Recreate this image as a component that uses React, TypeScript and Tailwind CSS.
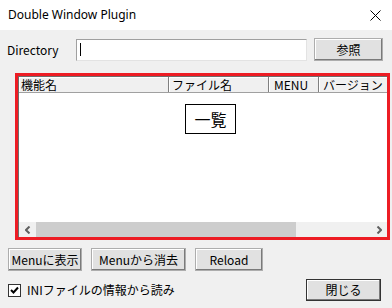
import React from "react";

const jp = { fontFamily: '"Noto Sans CJK JP", "Noto Sans", sans-serif' };

function Btn({ w, children, className = "" }: { w: string; children: React.ReactNode; className?: string }) {
  return (
    <div
      className={`${w} h-[23px] flex items-center justify-center text-[12px] text-black bg-[#e1e1e1] border border-[#adadad] shadow-[inset_-1px_-1px_0_#7a7a7a,inset_1px_1px_0_#ffffff] ${className}`}
    >
      <span className="leading-none">{children}</span>
    </div>
  );
}

export default function App() {
  return (
    <div className="w-[392px] h-[308px] overflow-hidden bg-[#f0f0f0] text-black" style={jp}>
      {/* title bar */}
      <div className="h-[30px] bg-white flex items-center justify-between pl-[8px] pr-[11px]">
        <span className="text-[12px] text-black" style={{ fontFamily: '"Noto Sans", sans-serif' }}>
          Double Window Plugin
        </span>
        <svg width="11" height="11" viewBox="0 0 11 11">
          <path d="M0.5 0.5 L10.5 10.5 M10.5 0.5 L0.5 10.5" stroke="#000" strokeWidth="1" />
        </svg>
      </div>

      {/* directory row */}
      <div className="flex items-center mt-[8px] pl-[7px]">
        <span className="w-[69px] text-[12px] leading-none">Directory</span>
        <div className="w-[231px] h-[22px] bg-white border border-[#a0a0a0] border-r-[#e3e3e3] border-b-[#e3e3e3] flex items-center pl-[3px]">
          <div className="w-px h-[13px] bg-black" />
        </div>
        <Btn w="w-[69px]" className="ml-[7px]">参照</Btn>
      </div>

      {/* red box */}
      <div className="ml-[15px] mt-[12px] w-[375px] h-[167px] border-[3px] border-[#ed1c24] flex">
        <div className="flex-1 flex flex-col border-l border-t border-[#6d6d6d] bg-white min-w-0 overflow-hidden">
          {/* header */}
          <div className="flex h-[16px] bg-[#f0f0f0] text-[12px] leading-none border-b border-[#a0a0a0] shrink-0">
            <div className="w-[150px] shrink-0 flex items-center pl-[2px] border-r border-[#808080] shadow-[inset_1px_1px_0_#ffffff]">機能名</div>
            <div className="w-[100px] shrink-0 flex items-center pl-[3px] border-r border-[#808080] shadow-[inset_1px_1px_0_#ffffff]">ファイル名</div>
            <div className="w-[50px] shrink-0 flex items-center pl-[5px] border-r border-[#808080] shadow-[inset_1px_1px_0_#ffffff]">MENU</div>
            <div className="w-[80px] shrink-0 flex items-center pl-[4px] shadow-[inset_1px_1px_0_#ffffff] whitespace-nowrap">バージョン</div>
          </div>
          {/* content */}
          <div className="flex-1 relative">
            <div className="ml-[166px] mt-[11px] w-[51px] h-[30px] border border-black flex items-center justify-center text-[16px] leading-none">
              一覧
            </div>
          </div>
          {/* scrollbar */}
          <div className="h-[15px] flex bg-[#f0f0f0] shrink-0">
            <div className="w-[17px] flex items-center justify-center">
              <svg width="6" height="8" viewBox="0 0 6 8">
                <path d="M4.5 0.5 L1 4 L4.5 7.5" stroke="#606060" strokeWidth="2" fill="none" />
              </svg>
            </div>
            <div className="w-[260px] bg-[#cdcdcd]" />
            <div className="flex-1" />
            <div className="w-[17px] flex items-center justify-center">
              <svg width="6" height="8" viewBox="0 0 6 8">
                <path d="M1.5 0.5 L5 4 L1.5 7.5" stroke="#606060" strokeWidth="2" fill="none" />
              </svg>
            </div>
          </div>
        </div>
      </div>

      {/* buttons row */}
      <div className="flex mt-[8px] pl-[8px] gap-[9px]">
        <Btn w="w-[74px]">Menuに表示</Btn>
        <Btn w="w-[95px]">Menuから消去</Btn>
        <Btn w="w-[68px]">Reload</Btn>
      </div>

      {/* bottom row */}
      <div className="flex items-center mt-[8px] pl-[8px] pr-[11px] justify-between">
        <div className="flex items-center">
          <div className="w-[13px] h-[13px] bg-white border border-[#333333] flex items-center justify-center">
            <svg width="9" height="9" viewBox="0 0 9 9">
              <path d="M1 4 L3.5 6.5 L8 1.5" stroke="#000" strokeWidth="2" fill="none" />
            </svg>
          </div>
          <span className="ml-[6px] text-[12px] leading-none">INIファイルの情報から読み</span>
        </div>
        <div className="w-[75px] h-[22px] flex items-center justify-center text-[12px] bg-[#e1e1e1] border border-[#333333] shadow-[inset_-1px_-1px_0_#7a7a7a,inset_1px_1px_0_#ffffff]">
          <span className="leading-none">閉じる</span>
        </div>
      </div>
    </div>
  );
}
